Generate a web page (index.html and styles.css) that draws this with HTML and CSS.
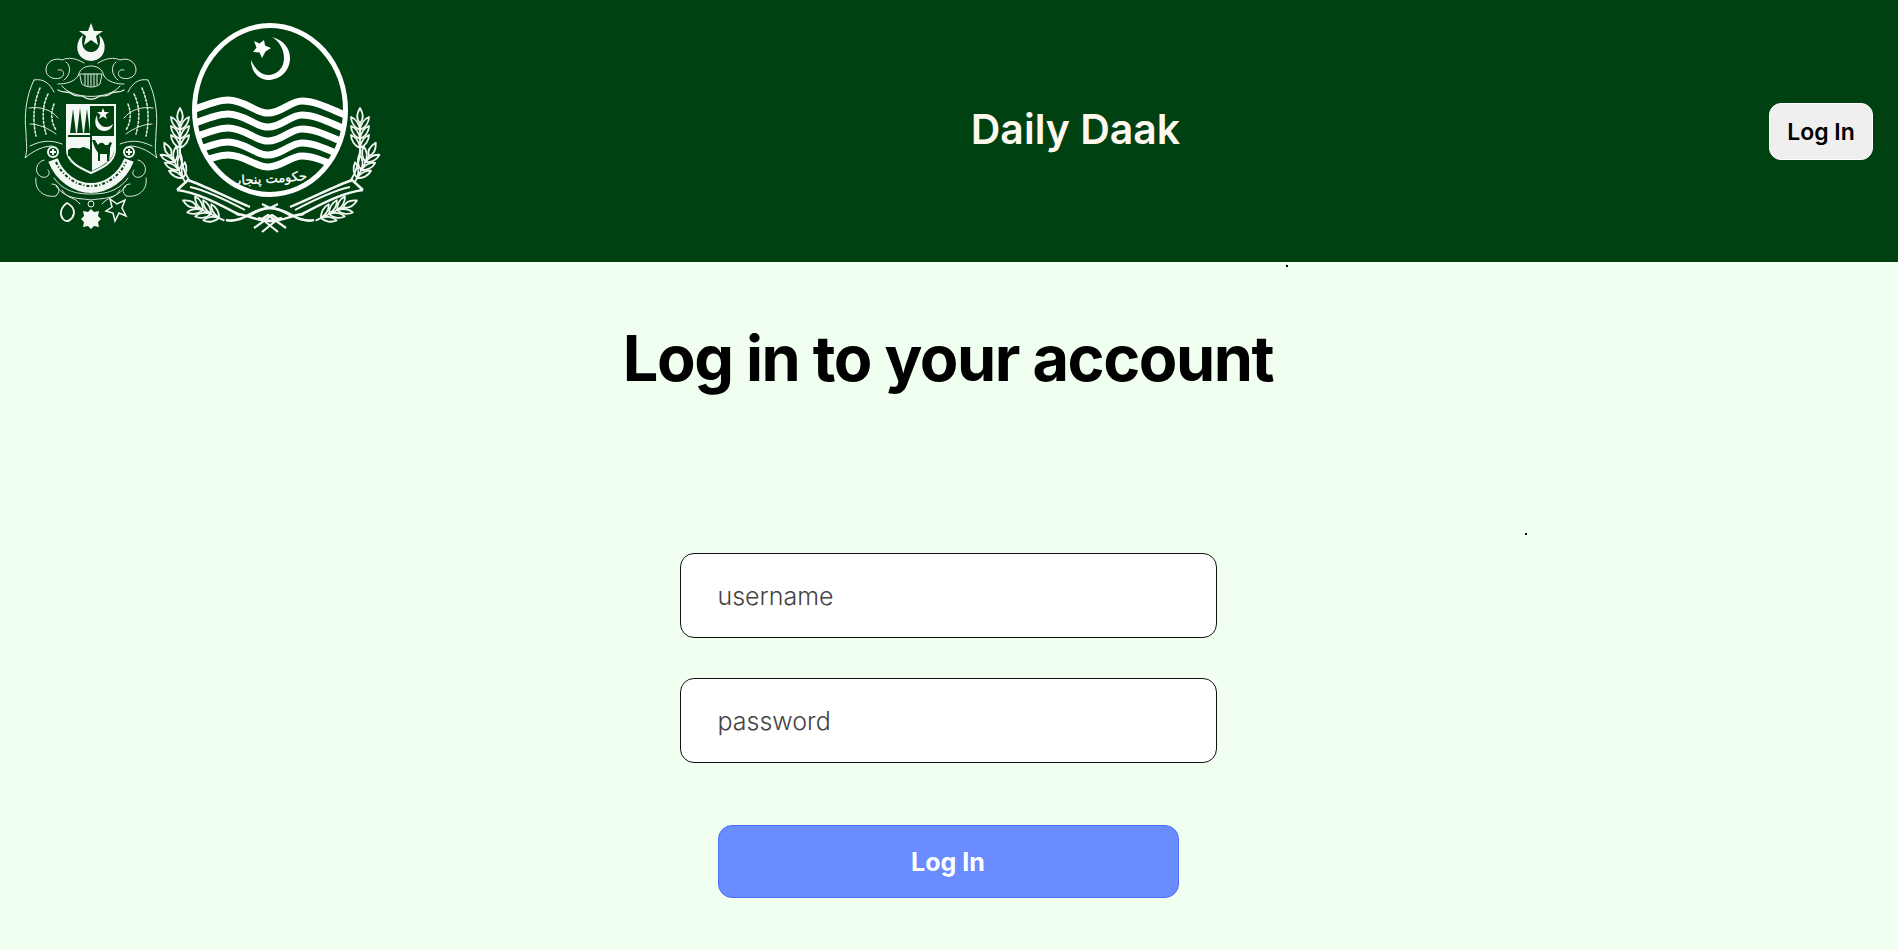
FILE: index.html
```html
<!DOCTYPE html>
<html>
<head>
    <title>Daily Daak</title>
    <link rel="stylesheet" href="styles.css">
</head>
<body>

    <header class="topbar">
        <svg class="logos" viewBox="0 0 385 240" aria-label="Government of Punjab emblems">
            <defs>
                <path id="grain" d="M0 0 c-5 -2 -9 -7 -9 -13 c5 2 8 6 9 13 M0 0 c5 -2 9 -7 9 -13 c-5 2 -8 6 -9 13"/>
                <g id="ear">
                    <use href="#grain"/>
                    <use href="#grain" y="-9"/>
                    <use href="#grain" y="-18"/>
                    <path d="M0 -25 c-4 -4 -3 -10 0 -15 c3 5 4 11 0 15 M0 6 V-25"/>
                </g>
                <g id="wreath">
                    <use href="#ear" transform="translate(180 148)"/>
                    <use href="#ear" transform="translate(183 178) rotate(-28)"/>
                    <use href="#ear" transform="translate(219 218) rotate(-64)"/>
                    <path d="M180 150 C180 160 184 172 190 182"/>
                    <!-- ribbon -->
                    <path stroke-width="2.400" d="M177 190 L188 180 C205 186 228 198 250 207 M177 190 C200 193 222 206 240 215"/>
                    <path d="M190 187 C208 191 228 201 245 210"/>
                    <path stroke-width="2.600" d="M226 220 C242 224 252 208 270 208 C279 208 284 212 292 216"/>
                    <path stroke-width="2.400" d="M236 214 C246 214 256 221 270 221 L282 218"/>
                    <path stroke-width="2.200" d="M254 228 L272 215 L278 219 L262 232 M270 208 L262 204"/>
                </g>
                <clipPath id="ringClip"><ellipse cx="270" cy="110" rx="76" ry="85"/></clipPath>
            </defs>

            <!-- left emblem: crest -->
            <g fill="#f4f8f4">
                <polygon points="91,23 94,31 103,31 96,36 98,45 91,40 84,45 86,36 79,31 88,31"/>
                <path d="M83 35 C74 42 75 60 91 61 C107 60 108 42 99 35 C102 45 98 52 91 52 C84 52 80 45 83 35Z"/>
            </g>
            <g fill="none" stroke="#dfe9df" stroke-width="1" stroke-linecap="round">
                <path d="M84 63 C76 58 68 57 62 60 C54 57 46 62 46 70 C46 77 54 80 60 78 C66 76 64 68 58 70"/>
                <path d="M98 63 C106 58 114 57 120 60 C128 57 136 62 136 70 C136 77 128 80 122 78 C116 76 118 68 124 70"/>
                <path d="M66 62 C72 66 70 76 64 80 M116 62 C110 66 112 76 118 80"/>
                <path d="M58 84 C66 84 74 82 78 76 C80 68 86 66 91 66 C96 66 102 68 104 76 C108 82 116 84 124 84"/>
                <path d="M80 74 H102 L100 84 C96 88 86 88 82 84Z"/>
                <path d="M85 74 V85 M88 74 V86 M91 74 V86 M94 74 V86 M97 74 V85"/>
                <path d="M58 90 C64 94 68 90 72 94 C76 98 80 94 84 97 C88 100 94 100 98 97 C102 94 106 98 110 94 C114 90 118 94 124 90" stroke-width="1.400"/>
                <path d="M62 86 C72 100 110 100 120 86"/>
                <!-- wings -->
                <path d="M34 80 C44 78 50 84 54 92 M34 80 C26 96 24 116 26 132 C26 144 28 150 25 158 C34 150 44 146 52 146"/>
                <path stroke-dasharray="2 2" stroke-width="1.600" d="M40 88 C34 102 32 118 36 136 M48 94 C42 106 42 120 46 134 M54 104 C50 114 52 124 56 130"/>
                <path d="M29 108 C40 106 52 110 58 118 M30 124 C38 124 48 128 56 134 M30 146 C42 140 52 140 62 144"/>
                <path d="M148 80 C138 78 132 84 128 92 M148 80 C156 96 158 116 156 132 C156 144 154 150 157 158 C148 150 138 146 130 146"/>
                <path stroke-dasharray="2 2" stroke-width="1.600" d="M142 88 C148 102 150 118 146 136 M134 94 C140 106 140 120 136 134 M128 104 C132 114 130 124 126 130"/>
                <path d="M153 108 C142 106 130 110 124 118 M152 124 C144 124 134 128 126 134 M152 146 C140 140 130 140 120 144"/>
                <!-- lower scrolls -->
                <path d="M44 160 C36 162 34 172 40 176 C46 180 52 174 48 170"/>
                <path d="M138 160 C146 162 148 172 142 176 C136 180 130 174 134 170"/>
                <path d="M36 178 C34 190 44 198 56 196 C62 190 58 184 52 184"/>
                <path d="M146 178 C148 190 138 198 126 196 C120 190 124 184 130 184"/>
                <path d="M54 178 C64 192 78 194 91 194 C104 194 118 192 128 178"/>
                <path d="M56 186 C66 200 80 198 91 200 C102 198 116 200 126 186"/>
                <path d="M62 190 C68 200 74 196 80 204 M120 190 C114 200 108 196 102 204"/>
            </g>
            <!-- left emblem: shield and motto -->
            <path fill="none" stroke="#f4f8f4" stroke-width="10" d="M53 160 C60 178 76 188 91 188 C106 188 122 178 129 160"/>
            <path fill="none" stroke="#00420f" stroke-width="2" stroke-dasharray="3 2 1 2" d="M56 162 C63 177 77 186 91 186 C105 186 119 177 126 162"/>
            <circle cx="53" cy="152" r="5" fill="#00420f" stroke="#f4f8f4" stroke-width="2"/>
            <circle cx="129" cy="152" r="5" fill="#00420f" stroke="#f4f8f4" stroke-width="2"/>
            <path fill="none" stroke="#f4f8f4" stroke-width="2" d="M50 152 h6 M53 149 v6 M126 152 h6 M129 149 v6"/>
            <path fill="#00420f" stroke="#f4f8f4" stroke-width="2" d="M67 105 H115 V150 C115 162 102 168 91 173 C80 168 67 162 67 150Z"/>
            <path fill="#f4f8f4" d="M68 106 H90 V135 H68Z M92 136 H114 V150 C114 160 102 166 92 171Z M68 137 H90 V155 H68Z"/>
            <path fill="#00420f" d="M73 109 L76 133 H70Z M80 108 L83 133 H77Z M87 109 L90 133 H84Z"/>
            <path fill="#00420f" d="M68 150 C73 146 78 150 83 147 C86 148 88 148 90 150 V156 H68Z"/>
            <path fill="#00420f" d="M92 140 h3 l3 5 c2 -3 5 -3 7 0 h3 l2 -3 l2 1 l-2 5 v5 l-1 8 h-2 v-7 h-7 v7 h-2 v-8 l-3 -5z"/>
            <path fill="#f4f8f4" d="M97 115 C93 122 96 131 104 131 C109 131 112 128 113 124 C110 127 105 128 102 126 C98 123 97 119 97 115Z"/>
            <polygon fill="#f4f8f4" points="103,108 104.500,112 109,112 105.500,115 107,119 103,116.500 99,119 100.500,115 97,112 101.500,112"/>
            <!-- left emblem: orders -->
            <path fill="none" stroke="#f4f8f4" stroke-width="1.800" d="M67 203 C61 207 59 214 63 219 C67 224 73 219 74 213 C74 209 71 205 67 203Z"/>
            <polygon fill="#f4f8f4" points="91,209 94,212 99,211 98,216 101,219 98,222 99,227 94,226 91,229 88,226 83,227 84,222 81,219 84,216 83,211 88,212"/>
            <circle cx="91" cy="204" r="3" fill="none" stroke="#f4f8f4"/>
            <polygon fill="none" stroke="#f4f8f4" stroke-width="1.500" points="125,200 122,208 126,216 119,213 115,221 113,213 106,211 112,207 110,199 117,204"/>

            <!-- right emblem: ring, crescent and star -->
            <ellipse cx="270" cy="110" rx="75.500" ry="84.500" fill="none" stroke="#fff" stroke-width="5"/>
            <path fill="#fff" d="M272 37 C284 40 290 49 290 58 C290 71 280 80 268 80 C258 80 251 71 251 60 C255 69 261 75 268 75 C277 75 284 68 284 58 C284 49 279 41 272 37Z"/>
            <polygon fill="#fff" points="264,40 265,45.500 271,48 265.500,51.500 262,58 259.500,52.500 253,52 256.500,47.500 254,41 259.500,43.500"/>
            <!-- right emblem: water bands -->
            <g clip-path="url(#ringClip)" fill="none" stroke="#fff" stroke-width="7">
                <path d="M190 111 C205 105 218 100 228 100 C245 100 255 113 268 113 C282 113 290 101 302 101 C316 101 330 109 350 117"/>
                <path d="M190 125 C205 119 218 114 228 114 C245 114 255 127 268 127 C282 127 290 115 302 115 C316 115 330 123 350 131"/>
                <path d="M190 139 C205 133 218 128 228 128 C245 128 255 141 268 141 C282 141 290 129 302 129 C316 129 330 137 350 145"/>
                <path d="M190 153 C205 147 218 142 228 142 C245 142 255 155 268 155 C282 155 290 143 302 143 C316 143 330 151 350 159"/>
                <path d="M190 166 C205 160 218 155 228 155 C245 155 255 167 268 167 C282 167 290 156 302 156 C316 156 330 164 350 172"/>
            </g>
            <text class="urdu" x="268" y="183" text-anchor="middle" transform="rotate(-4 268 178)">حکومت پنجاب</text>
            <!-- right emblem: wheat, one side mirrored -->
            <g fill="none" stroke="#f4f8f4" stroke-width="1.800" stroke-linejoin="round">
                <use href="#wreath"/>
                <use href="#wreath" transform="translate(540 0) scale(-1 1)"/>
            </g>
        </svg>
        <h1 class="site-title">Daily Daak</h1>
        <button class="top-login" type="button">Log In</button>
    </header>

    <main class="login-page">
        <h2 class="login-title">Log in to your account</h2>
        <form class="login-form">
            <input class="field" type="text" placeholder="username">
            <input class="field" type="password" placeholder="password">
            <button class="login-btn" type="button">Log In</button>
        </form>
        <span class="speck speck-one"></span>
        <span class="speck speck-two"></span>
    </main>

</body>
</html>
```

FILE: styles.css
```css
html, body {
    height: 100%;
}

body {
    margin: 0;
    background-color: #f0fff0;
    font-family: Inter, Roboto, sans-serif;
    overflow: hidden;
}

.topbar {
    display: flex;
    align-items: center;
    justify-content: space-between;
    height: 262px;
    padding: 0 25px 0 0;
    background-color: #004112;
    box-sizing: border-box;
}

.logos {
    align-self: flex-start;
    width: 385px;
    height: 240px;
}

.urdu {
    fill: #fff;
    stroke: #fff;
    stroke-width: 0.3px;
    font-family: "DejaVu Sans", sans-serif;
    font-size: 13px;
}

.site-title {
    margin: 0 0 0 -3px;
    color: #fff8ee;
    font-size: 41px;
    font-weight: 600;
    transform: translateY(-2px);
}

.top-login {
    width: 104px;
    height: 57px;
    padding: 2px 0 0;
    background-color: #efefef;
    border: 1px solid #fff;
    border-radius: 12px;
    color: #000;
    font-family: inherit;
    font-size: 23px;
    font-weight: 600;
}

.login-page {
    position: relative;
    display: flex;
    flex-direction: column;
    align-items: center;
    padding-right: 2px;
}

.login-title {
    margin: 59px 0 0;
    color: #000;
    font-size: 63px;
    line-height: 75px;
    font-weight: 700;
    letter-spacing: -1.45px;
}

.login-form {
    display: flex;
    flex-direction: column;
    align-items: center;
    margin-top: 157px;
    width: 537px;
}

.field {
    width: 100%;
    height: 85px;
    margin-bottom: 40px;
    padding: 0 37px;
    background-color: #fff;
    border: 1px solid #111;
    border-radius: 14px;
    box-sizing: border-box;
    font-family: inherit;
    font-size: 25px;
    font-weight: 300;
}

.field::placeholder {
    color: #444;
}

.login-btn {
    width: 461px;
    height: 73px;
    margin-top: 22px;
    background-color: #6b8cff;
    border: 1px solid #4d6fff;
    border-radius: 14px;
    color: #fff;
    font-family: inherit;
    font-size: 25px;
    font-weight: 700;
}

.speck {
    position: absolute;
    width: 2px;
    height: 2px;
    background-color: #000;
}

.speck-one {
    left: 1286px;
    top: 3px;
}

.speck-two {
    left: 1525px;
    top: 271px;
}
```
